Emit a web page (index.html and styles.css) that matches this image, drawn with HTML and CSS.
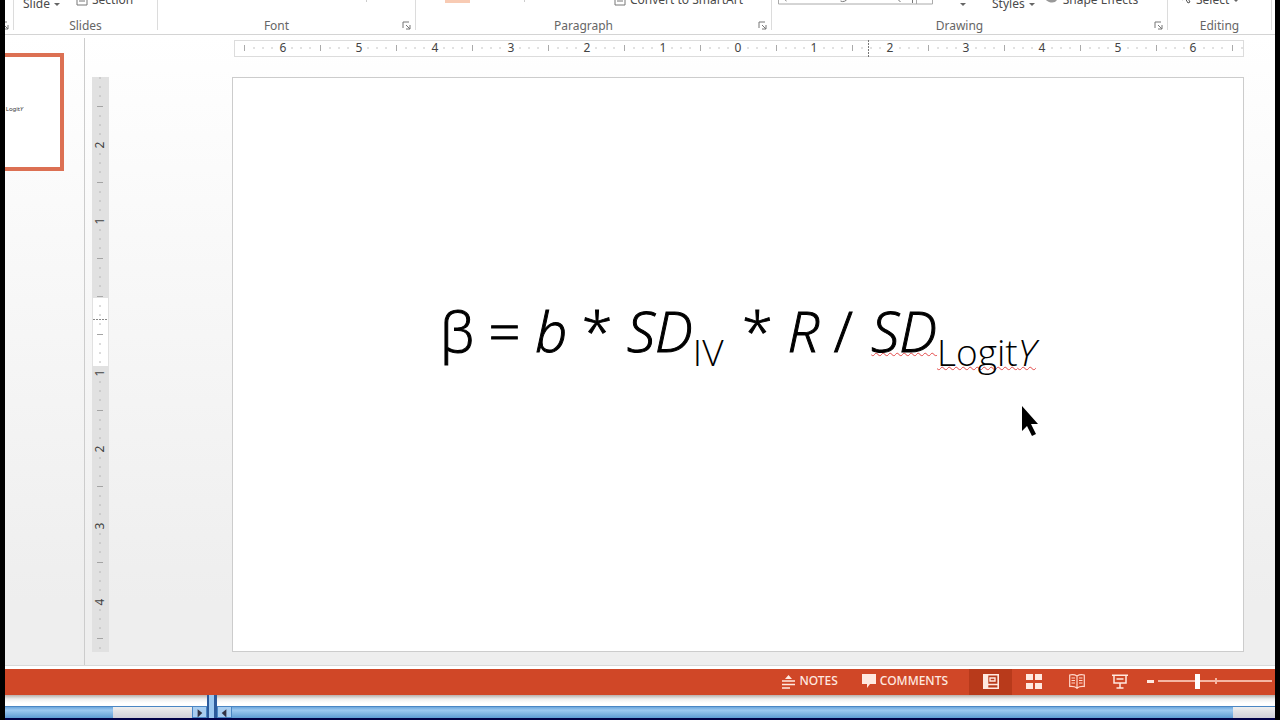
FILE: index.html
```html
<!DOCTYPE html>
<html lang="en">
<head>
<meta charset="utf-8">
<title>Presentation editor</title>
<link rel="stylesheet" href="styles.css">
</head>
<body>
<div class="app">
  <header class="ribbon">
    <section class="group edge"><button class="launcher" aria-label="Clipboard options"><svg viewBox="0 0 9 9"><path d="M1 7V1h6M4 4l4 4M8 4v4H4"/></svg></button></section>
    <section class="group">
      <div class="tools slides-tools">
        <button class="tool low">Slide<i class="caret"></i></button>
        <button class="tool"><svg class="page-icon" viewBox="0 0 12 12"><path d="M1 0v11h10V0M3 4h6M3 7h6"/></svg>Section</button>
      </div>
      <h2 class="label">Slides</h2>
    </section>
    <section class="group">
      <div class="tools font-tools"><i class="divider"></i></div>
      <h2 class="label">Font</h2>
      <button class="launcher" aria-label="Font options"><svg viewBox="0 0 9 9"><path d="M1 7V1h6M4 4l4 4M8 4v4H4"/></svg></button>
    </section>
    <section class="group">
      <div class="tools paragraph-tools">
        <i class="swatch"></i><i class="divider"></i>
        <button class="tool convert"><svg class="page-icon" viewBox="0 0 12 12"><path d="M1 0v11h10V0M3 4h6M3 7h6"/></svg>Convert to SmartArt</button>
      </div>
      <h2 class="label">Paragraph</h2>
      <button class="launcher" aria-label="Paragraph options"><svg viewBox="0 0 9 9"><path d="M1 7V1h6M4 4l4 4M8 4v4H4"/></svg></button>
    </section>
    <section class="group">
      <div class="tools drawing-tools">
        <span class="gallery"><svg viewBox="0 0 154 12"><path d="M0 0v11h154V0M138 0v11" stroke="#aaa"/><path d="M8 8q-3-1-1-4M62 8q4 2 8-3M119 6l3 3M134 4v6" stroke="#777"/></svg></span>
        <i class="caret arrange"></i>
        <button class="tool low styles">Styles<i class="caret"></i></button>
        <button class="tool"><svg class="effects-icon" viewBox="0 0 16 10"><path d="M1 0h14v3q-2 6-9 4-5-2-5-7z" fill="#999"/><path d="M8 2h6v3H9z" fill="#555"/></svg>Shape Effects</button>
      </div>
      <h2 class="label">Drawing</h2>
      <button class="launcher" aria-label="Drawing options"><svg viewBox="0 0 9 9"><path d="M1 7V1h6M4 4l4 4M8 4v4H4"/></svg></button>
    </section>
    <section class="group">
      <div class="tools editing-tools">
        <button class="tool"><svg class="select-icon" viewBox="0 0 12 10"><path d="M2 0v5l3-2 3 5 2-1-3-5h4" fill="none" stroke="#555"/></svg>Select<i class="caret"></i></button>
      </div>
      <h2 class="label">Editing</h2>
    </section>
    <span></span>
  </header>

  <main class="workspace">
    <nav class="thumbnails" aria-label="Slides">
      <button class="thumbnail"><span>Logit<em>Y</em></span></button>
    </nav>
    <section class="editor">
      <svg class="ruler-h" viewBox="0 0 1010 17" preserveAspectRatio="none">
        <defs>
          <pattern id="marks-h" x="48" y="0" width="76" height="17" patternUnits="userSpaceOnUse">
            <path d="M10 7v2M19 7v2M28 7v2M48 7v2M57 7v2M66 7v2" stroke="#c4c4c4"/><path d="M38.500 5v6" stroke="#aaa"/>
          </pattern>
        </defs>
        <rect x=".5" y=".5" width="1009" height="16" fill="#fff" stroke="#dcdcdc"/>
        <rect x="1" y="1" width="1008" height="15" fill="url(#marks-h)"/>
        <path d="M634.500 0v17" stroke="#777" stroke-dasharray="2 1"/>
        <g class="numbers">
          <text x="49" y="12">6</text><text x="125" y="12">5</text><text x="201" y="12">4</text><text x="277" y="12">3</text><text x="353" y="12">2</text><text x="429" y="12">1</text><text x="504" y="12">0</text><text x="580" y="12">1</text><text x="656" y="12">2</text><text x="732" y="12">3</text><text x="808" y="12">4</text><text x="884" y="12">5</text><text x="959" y="12">6</text>
        </g>
      </svg>
      <svg class="ruler-v" viewBox="0 0 17 575" preserveAspectRatio="none">
        <defs>
          <pattern id="marks-v" x="0" y="67" width="17" height="76" patternUnits="userSpaceOnUse">
            <path d="M7 10h2M7 19h2M7 28h2M7 48h2M7 57h2M7 66h2" stroke="#b8b8b8"/><path d="M5 38.500h6" stroke="#a4a4a4"/>
          </pattern>
        </defs>
        <rect width="17" height="575" fill="#e1e1e1"/>
        <rect x="1" y="221" width="15" height="68" fill="#fff"/>
        <rect width="17" height="575" fill="url(#marks-v)"/>
        <path d="M5 219.500h6" stroke="#aaa"/>
        <path d="M1 242.500h15" stroke="#888" stroke-dasharray="2 1"/>
        <g class="numbers">
          <text transform="translate(12 68) rotate(-90)">2</text><text transform="translate(12 144) rotate(-90)">1</text><text transform="translate(12 296) rotate(-90)">1</text><text transform="translate(12 372) rotate(-90)">2</text><text transform="translate(12 449) rotate(-90)">3</text><text transform="translate(12 525) rotate(-90)">4</text>
        </g>
      </svg>
      <article class="slide">
        <p class="formula">β = <em>b</em> * <em>SD</em><span class="sub variable">IV</span> * <em>R</em> <span class="slash">/</span> <em class="misspelt">SD</em><span class="sub misspelt">Logit<em>Y</em></span></p>
        <svg class="pointer" viewBox="0 0 18 32"><path d="M1 1v25l5-5 5 10 4-2-5-10h7z"/></svg>
      </article>
    </section>
  </main>

  <footer class="status">
    <button class="notes"><svg viewBox="0 0 13 15"><path d="M6.500 1l3.500 4H3z" fill="#ffe9e0"/><path d="M0 7h13M0 10.500h13M0 14h8" stroke="#ffe9e0" stroke-width="1.500"/></svg>NOTES</button>
    <button class="comments"><svg viewBox="0 0 14 14"><path d="M0 0h14v10H8l-3 4v-4H0z" fill="#ffe9e0"/></svg>COMMENTS</button>
    <div class="views">
      <button class="view active" aria-label="Normal"><svg viewBox="0 0 16 15"><path d="M.8.8h14.400v13.400H.8zM4.500 1v13M5 10.500h10" fill="none" stroke="#ffe9e0" stroke-width="1.600"/><path d="M1 1h3v13H1z" fill="#ffe9e0"/><path d="M7 4h5v3H7z" fill="none" stroke="#ffe9e0" stroke-width="1.400"/></svg></button>
      <button class="view" aria-label="Slide sorter"><svg viewBox="0 0 16 15"><path d="M0 0h7v6H0zM9 0h7v6H9zM0 9h7v6H0zM9 9h7v6H9z" fill="#ffe9e0"/></svg></button>
      <button class="view" aria-label="Reading view"><svg viewBox="0 0 16 15"><path d="M8 2Q5 0 .7 1v11.500Q5 12 8 14q3-2 7.300-1.500V1Q11 0 8 2v13M2.500 4H6M2.500 6.500H6M2.500 9H6M10 4h3.500M10 6.500h3.500M10 9h3.500" fill="none" stroke="#ffd8cb" stroke-width="1.200"/></svg></button>
      <button class="view" aria-label="Slide show"><svg viewBox="0 0 16 15"><path d="M0 1.200h16M2 2v7h12V2M4.500 5h7M8 9v5M4.500 14h7" fill="none" stroke="#ffe9e0" stroke-width="1.500"/></svg></button>
    </div>
    <button class="minus" aria-label="Zoom out"></button>
    <span class="zoom"><input type="range" min="0" max="100" value="34" aria-label="Zoom"><i></i></span>
  </footer>

  <div class="behind">
    <div class="pane left"><span class="track"></span><span class="thumb"></span><button aria-label="Scroll right"><svg viewBox="0 0 14 11"><path d="M5 2l5 4-5 5z" fill="#334"/></svg></button></div>
    <div class="splitter"></div>
    <div class="pane right"><button aria-label="Scroll left"><svg viewBox="0 0 14 11"><path d="M9 2L4 6l5 5z" fill="#334"/></svg></button><span class="track"></span><span class="thumb"></span></div>
  </div>
</div>
</body>
</html>
```
FILE: styles.css
```css
* { box-sizing: border-box; }
body { margin: 0; background: #000; color: #555; font: 12px/16px "Noto Sans", sans-serif; }
button { margin: 0; padding: 0; border: 0; background: none; color: inherit; font: inherit; }
svg { display: block; flex: none; }

.app { display: flex; flex-direction: column; height: 100vh; margin: 0 5px; background: #fff; overflow: hidden; }

.ribbon {
  display: grid;
  grid-template-columns: 9px 144fr 258fr 356fr 396fr 104fr 3px;
  flex: none;
  height: 35px;
  overflow: hidden;
  border-bottom: 1px solid #d4d4d4;
}
.group { position: relative; display: flex; flex-direction: column; justify-content: flex-end; min-width: 0; height: 30px; border-right: 1px solid #dcdcdc; }
.label { margin: 0 0 -5px; font-size: 12px; font-weight: 400; line-height: 18px; text-align: center; color: #666; }
.group:has(.launcher) .label { padding-right: 20px; }
.launcher { position: absolute; right: 4px; bottom: 0; width: 9px; height: 9px; }
.launcher svg { width: 9px; height: 9px; fill: none; stroke: #777; }
.tools { display: flex; align-items: flex-end; height: 17px; color: #4a4a4a; white-space: nowrap; }
.tool { display: flex; align-items: center; gap: 4px; height: 16px; margin-bottom: 9px; }
.tool.low { margin-bottom: 5px; }
.caret { width: 0; border: 3px solid transparent; border-top-color: #666; border-bottom: 0; }
.page-icon { width: 12px; height: 12px; fill: none; stroke: #777; }
.slides-tools { gap: 16px; padding-left: 9px; }
.divider { width: 1px; height: 14px; background: #ccc; }
.font-tools { padding-left: 208px; }
.font-tools .divider, .paragraph-tools .divider { margin-bottom: 15px; }
.swatch { width: 25px; height: 14px; margin-bottom: 14px; background: #f8cbb4; }
.paragraph-tools { padding-left: 29px; }
.paragraph-tools .divider { margin-left: 54px; }
.convert { margin-left: 89px; }
.gallery svg { width: 155px; height: 12px; margin-bottom: 12px; fill: none; }
.drawing-tools { padding-left: 6px; }
.arrange { margin: 0 26px 11px 27px; }
.styles { margin-right: 8px; }
.effects-icon { width: 16px; height: 10px; }
.editing-tools { padding-left: 12px; }
.select-icon { width: 12px; height: 10px; }

.workspace { display: flex; flex: 1; min-height: 0; background: linear-gradient(#fff, #eee 90%); border-bottom: 1px solid #d8dada; }
.thumbnails { flex: none; width: 80px; margin-top: 3px; padding-top: 15px; border-right: 1px solid #ccc; }
.thumbnail { display: flex; align-items: center; justify-content: flex-end; width: 59px; height: 118px; padding: 0 37px 7px 0; border: 4px solid #dc7053; border-left: 0; background: #fff; color: #333; font-size: 6px; overflow: hidden; }
.editor { display: grid; grid-template: 17px 1fr / 17px 1fr; gap: 20px 123px; flex: 1; min-width: 0; padding: 5px 31px 13px 7px; }
.ruler-h { grid-column: 2; width: calc(100% - 2px); height: 17px; margin-left: 2px; }
.ruler-v { width: 17px; height: 100%; min-height: 0; }
.numbers { fill: #444; font-size: 12px; text-anchor: middle; }
.slide { position: relative; display: flex; align-items: center; justify-content: center; min-width: 0; background: #fff; border: 1px solid #ccc; }
.formula { margin: 0 0 70px; color: #000; font: 300 56px/80px "Open Sans", sans-serif; -webkit-text-stroke: 1px #000; white-space: nowrap; }
.sub { font-size: 37px; line-height: 1; vertical-align: -14px; -webkit-text-stroke-width: 0; }
.variable { margin-right: 4px; }
.slash { margin-right: 4px; }
.misspelt { text-decoration: underline wavy #e34a4a 1px; text-decoration-skip-ink: none; text-underline-offset: 0; }
.pointer { position: absolute; left: 78%; top: 57%; width: 18px; height: 32px; }

.status { display: flex; align-items: center; flex: none; height: 26px; margin-top: 3px; padding-right: 3px; justify-content: flex-end; background: #d04727; color: #ffe9e0; }
.notes, .comments { display: flex; align-items: center; gap: 4px; font-weight: 500; }
.status > :not(.views) { margin-bottom: 2px; }
.notes { margin-right: 24px; }
.comments { margin-right: 21px; }
.notes svg { width: 13px; height: 15px; }
.comments svg { width: 14px; height: 14px; }
.views { display: flex; align-self: stretch; }
.view { display: grid; place-items: center; width: 43px; padding-bottom: 2px; }
.view svg { width: 16px; height: 15px; }
.view.active { background: #b83a1b; }
.minus { width: 7px; height: 3px; margin: 0 4px 0 6px; background: #ffe9e0; }
.zoom { position: relative; display: flex; align-items: center; width: 114px; }
.zoom input { appearance: none; width: 100%; height: 15px; margin: 0; background: linear-gradient(#f5b5a3, #f5b5a3) center / 100% 2px no-repeat; }
.zoom input::-webkit-slider-thumb { appearance: none; width: 5px; height: 15px; background: #fff; }
.zoom i { position: absolute; left: 50%; width: 2px; height: 6px; background: #f5b5a3; }

.behind { display: flex; flex: none; height: 25px; background: linear-gradient(#b8b0ac, #eee 4px, #fff 8px); border-bottom: 2px solid #000048; }
.pane { display: flex; align-items: flex-end; min-width: 0; }
.pane > * { height: 12px; border-top: 1px solid #4a86c4; }
.left { flex: none; width: 202px; }
.right { flex: 1; }
.track { flex: 1; background: linear-gradient(#6ba6dc, #9cc8f0 30%, #5e9cd4); }
.thumb { width: 76px; background: linear-gradient(#eee, #cfcfd8); }
.left .thumb { width: 79px; }
.right .thumb { width: 42px; }
.pane button { width: 15px; border: 1px solid #4a86c4; background: #a8cdf0; }
.pane button svg { width: 13px; height: 11px; }
.splitter { width: 10px; border: solid #2c5a9c; border-width: 0 3px 0 2px; background: #9cc8f0; }
```
